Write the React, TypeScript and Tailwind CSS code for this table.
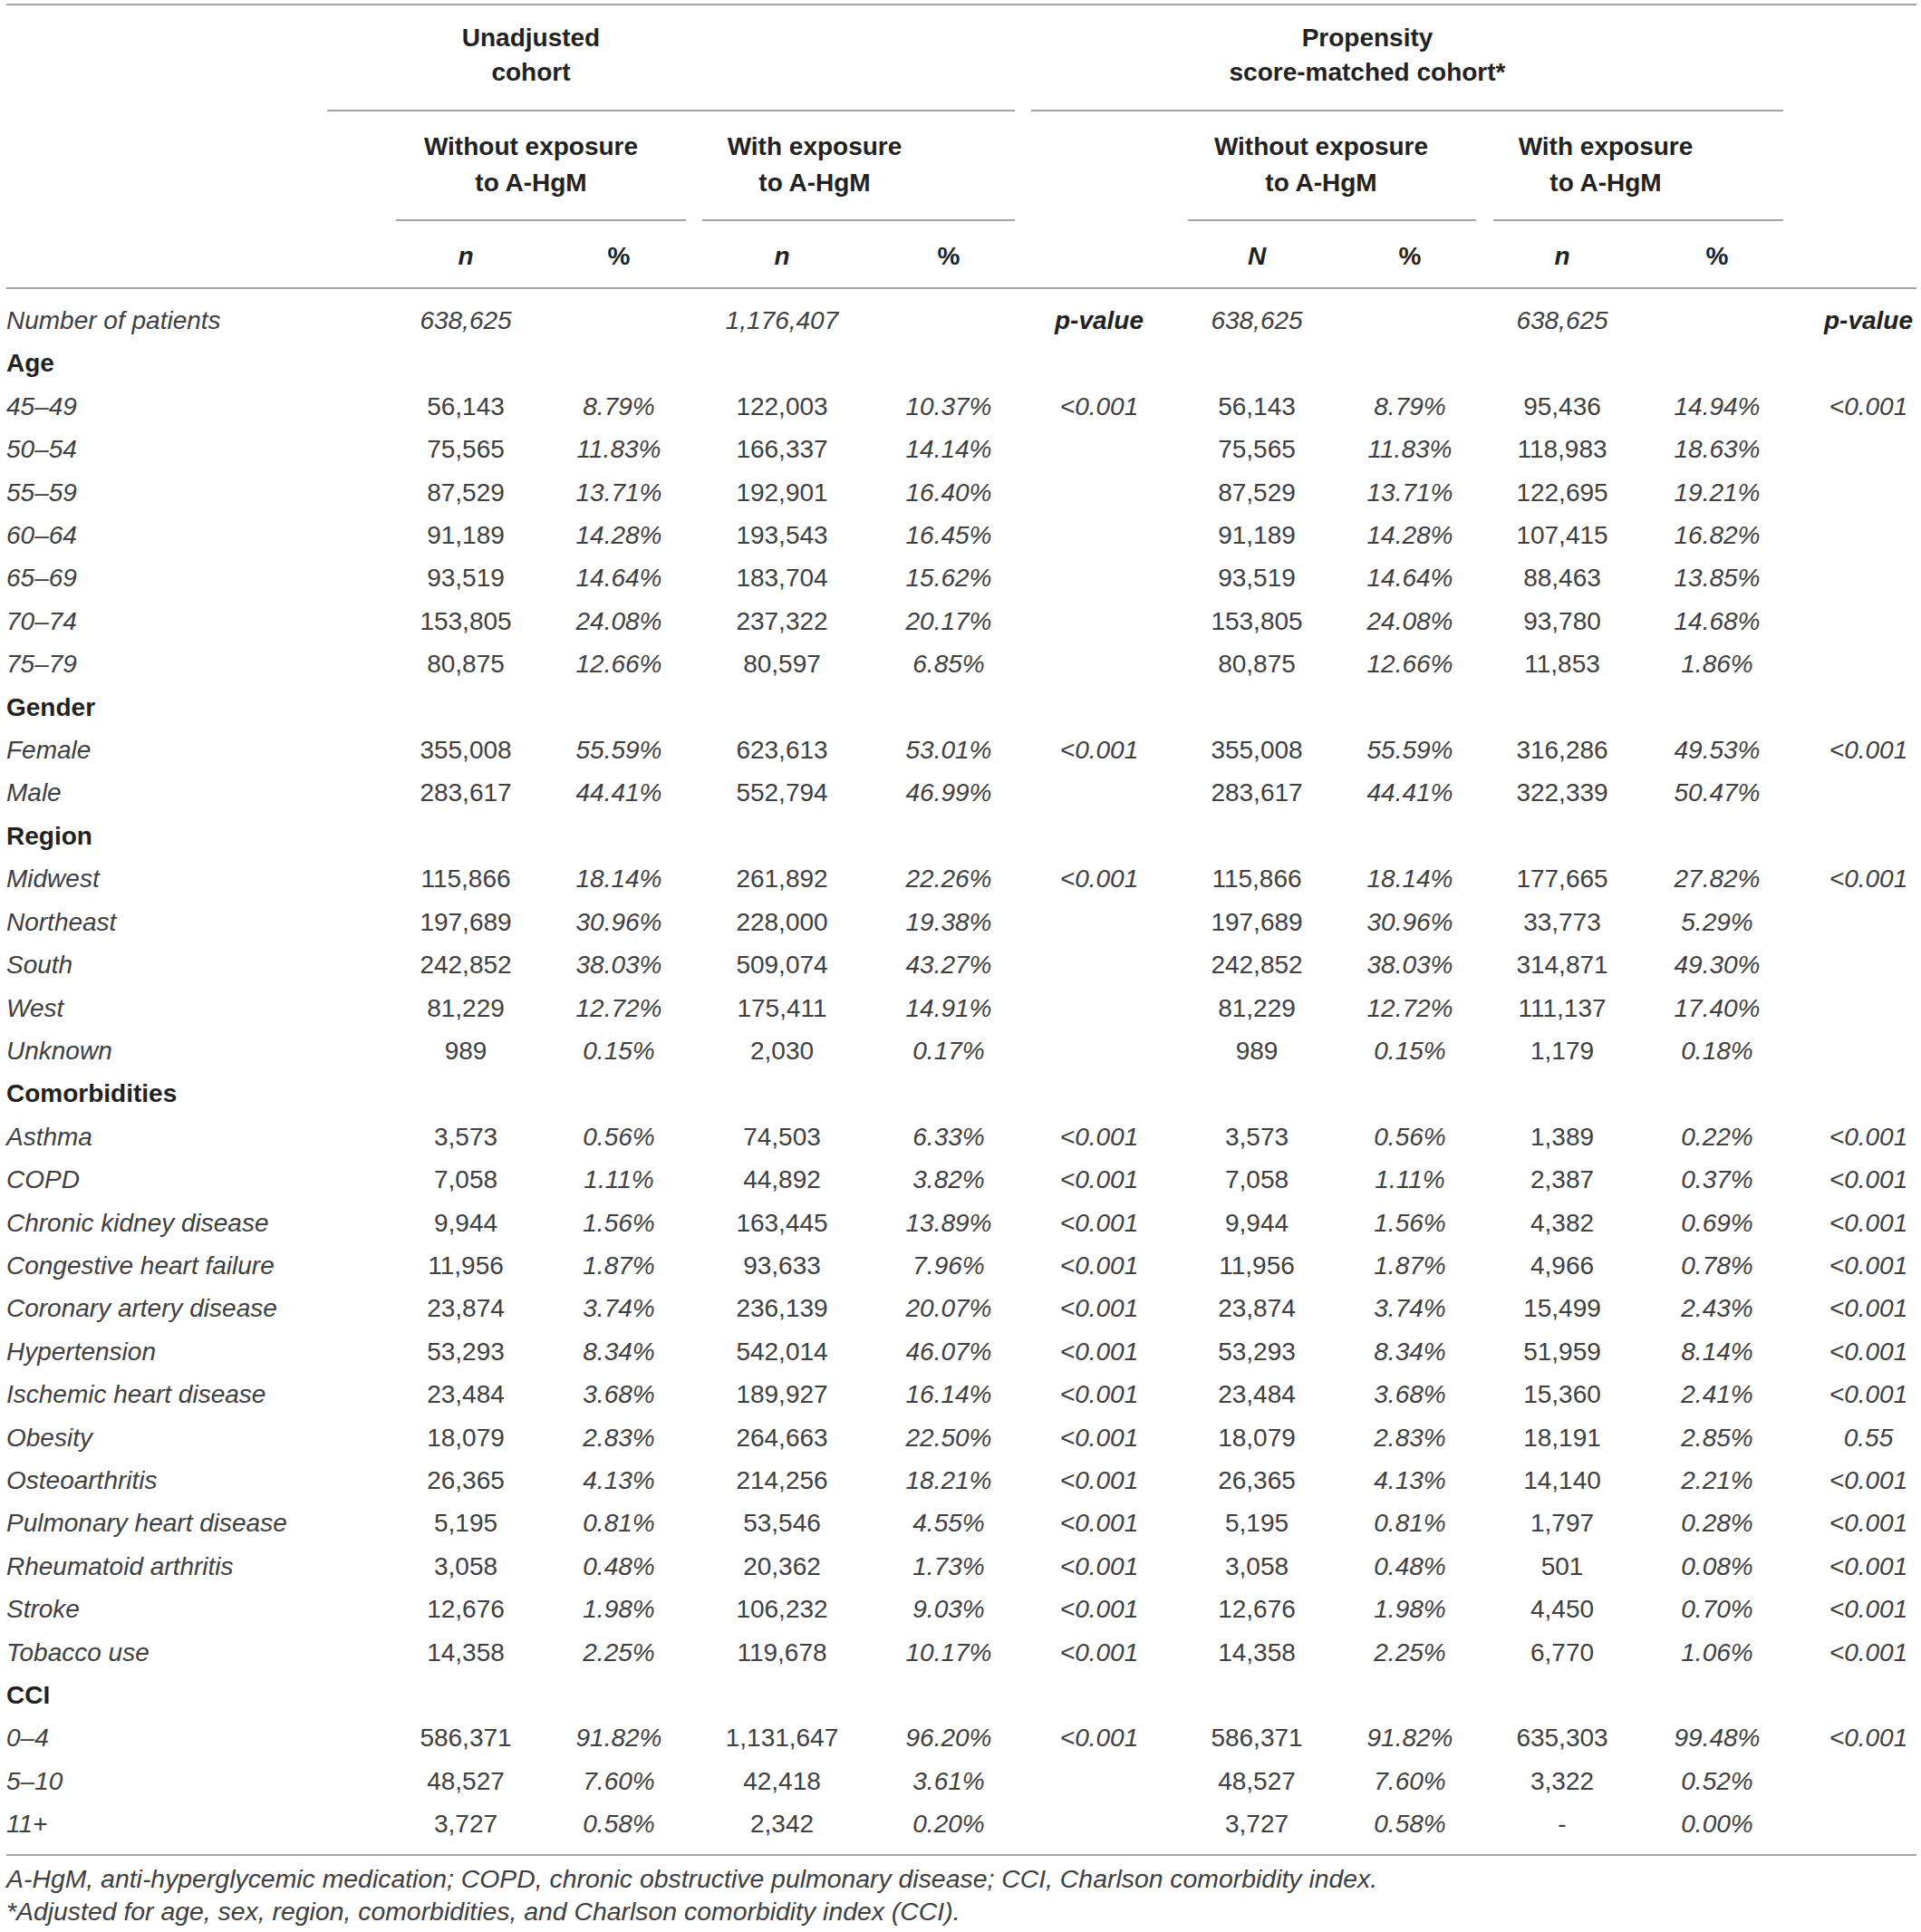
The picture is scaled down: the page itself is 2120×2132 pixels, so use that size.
const GRID =
  "grid grid-cols-[423px_168px_170px_190px_178px_154px_194px_144px_192px_150px_145px]";

type Row = { label: string; head?: boolean; top?: boolean; v?: string[] };

const rows: Row[] = [
  { label: "Number of patients", top: true, v: ["638,625", "", "1,176,407", "", "p-value", "638,625", "", "638,625", "", "p-value"] },
  { label: "Age", head: true },
  { label: "45–49", v: ["56,143", "8.79%", "122,003", "10.37%", "<0.001", "56,143", "8.79%", "95,436", "14.94%", "<0.001"] },
  { label: "50–54", v: ["75,565", "11.83%", "166,337", "14.14%", "", "75,565", "11.83%", "118,983", "18.63%", ""] },
  { label: "55–59", v: ["87,529", "13.71%", "192,901", "16.40%", "", "87,529", "13.71%", "122,695", "19.21%", ""] },
  { label: "60–64", v: ["91,189", "14.28%", "193,543", "16.45%", "", "91,189", "14.28%", "107,415", "16.82%", ""] },
  { label: "65–69", v: ["93,519", "14.64%", "183,704", "15.62%", "", "93,519", "14.64%", "88,463", "13.85%", ""] },
  { label: "70–74", v: ["153,805", "24.08%", "237,322", "20.17%", "", "153,805", "24.08%", "93,780", "14.68%", ""] },
  { label: "75–79", v: ["80,875", "12.66%", "80,597", "6.85%", "", "80,875", "12.66%", "11,853", "1.86%", ""] },
  { label: "Gender", head: true },
  { label: "Female", v: ["355,008", "55.59%", "623,613", "53.01%", "<0.001", "355,008", "55.59%", "316,286", "49.53%", "<0.001"] },
  { label: "Male", v: ["283,617", "44.41%", "552,794", "46.99%", "", "283,617", "44.41%", "322,339", "50.47%", ""] },
  { label: "Region", head: true },
  { label: "Midwest", v: ["115,866", "18.14%", "261,892", "22.26%", "<0.001", "115,866", "18.14%", "177,665", "27.82%", "<0.001"] },
  { label: "Northeast", v: ["197,689", "30.96%", "228,000", "19.38%", "", "197,689", "30.96%", "33,773", "5.29%", ""] },
  { label: "South", v: ["242,852", "38.03%", "509,074", "43.27%", "", "242,852", "38.03%", "314,871", "49.30%", ""] },
  { label: "West", v: ["81,229", "12.72%", "175,411", "14.91%", "", "81,229", "12.72%", "111,137", "17.40%", ""] },
  { label: "Unknown", v: ["989", "0.15%", "2,030", "0.17%", "", "989", "0.15%", "1,179", "0.18%", ""] },
  { label: "Comorbidities", head: true },
  { label: "Asthma", v: ["3,573", "0.56%", "74,503", "6.33%", "<0.001", "3,573", "0.56%", "1,389", "0.22%", "<0.001"] },
  { label: "COPD", v: ["7,058", "1.11%", "44,892", "3.82%", "<0.001", "7,058", "1.11%", "2,387", "0.37%", "<0.001"] },
  { label: "Chronic kidney disease", v: ["9,944", "1.56%", "163,445", "13.89%", "<0.001", "9,944", "1.56%", "4,382", "0.69%", "<0.001"] },
  { label: "Congestive heart failure", v: ["11,956", "1.87%", "93,633", "7.96%", "<0.001", "11,956", "1.87%", "4,966", "0.78%", "<0.001"] },
  { label: "Coronary artery disease", v: ["23,874", "3.74%", "236,139", "20.07%", "<0.001", "23,874", "3.74%", "15,499", "2.43%", "<0.001"] },
  { label: "Hypertension", v: ["53,293", "8.34%", "542,014", "46.07%", "<0.001", "53,293", "8.34%", "51,959", "8.14%", "<0.001"] },
  { label: "Ischemic heart disease", v: ["23,484", "3.68%", "189,927", "16.14%", "<0.001", "23,484", "3.68%", "15,360", "2.41%", "<0.001"] },
  { label: "Obesity", v: ["18,079", "2.83%", "264,663", "22.50%", "<0.001", "18,079", "2.83%", "18,191", "2.85%", "0.55"] },
  { label: "Osteoarthritis", v: ["26,365", "4.13%", "214,256", "18.21%", "<0.001", "26,365", "4.13%", "14,140", "2.21%", "<0.001"] },
  { label: "Pulmonary heart disease", v: ["5,195", "0.81%", "53,546", "4.55%", "<0.001", "5,195", "0.81%", "1,797", "0.28%", "<0.001"] },
  { label: "Rheumatoid arthritis", v: ["3,058", "0.48%", "20,362", "1.73%", "<0.001", "3,058", "0.48%", "501", "0.08%", "<0.001"] },
  { label: "Stroke", v: ["12,676", "1.98%", "106,232", "9.03%", "<0.001", "12,676", "1.98%", "4,450", "0.70%", "<0.001"] },
  { label: "Tobacco use", v: ["14,358", "2.25%", "119,678", "10.17%", "<0.001", "14,358", "2.25%", "6,770", "1.06%", "<0.001"] },
  { label: "CCI", head: true },
  { label: "0–4", v: ["586,371", "91.82%", "1,131,647", "96.20%", "<0.001", "586,371", "91.82%", "635,303", "99.48%", "<0.001"] },
  { label: "5–10", v: ["48,527", "7.60%", "42,418", "3.61%", "", "48,527", "7.60%", "3,322", "0.52%", ""] },
  { label: "11+", v: ["3,727", "0.58%", "2,342", "0.20%", "", "3,727", "0.58%", "-", "0.00%", ""] },
];

// n columns are upright, percentages and p-values italic
const upright = [0, 2, 5, 7];

function Line({ w }: { w: string }) {
  return <div className={`h-[2px] bg-[#a3a3a3] ${w}`} />;
}

function BodyRow({ row }: { row: Row }) {
  if (row.head) {
    return (
      <div className={`${GRID} leading-[47.4px]`}>
        <div className="font-bold text-[#222]">{row.label}</div>
      </div>
    );
  }
  return (
    <div className={`${GRID} leading-[47.4px]`}>
      <div className="italic">{row.label}</div>
      {row.v!.map((v, i) => {
        const isP = v === "p-value";
        const cls = [
          "text-center whitespace-nowrap",
          i === 9 ? "pl-[39px]" : "",
          isP ? "font-bold italic text-[#222]" : row.top || !upright.includes(i) ? "italic" : "",
        ].join(" ");
        return (
          <div key={i} className={cls}>
            {v}
          </div>
        );
      })}
    </div>
  );
}

export default function App() {
  return (
    <div className="bg-white min-h-screen font-['Liberation_Sans',Arial,sans-serif] text-[28px] text-[#404040]">
      <div className="ml-[7px] w-[2108px] pt-[4px]">
        <Line w="w-full" />

        {/* cohort header */}
        <div className="flex font-bold text-[#222] leading-[38px]">
          <div className="w-[354px]" />
          <div className="w-[759px] flex flex-col">
            <div className="w-[450px] text-center pt-[17px] pb-[22px]">
              Unadjusted
              <br />
              cohort
            </div>
            <Line w="w-full" />
          </div>
          <div className="w-[18px]" />
          <div className="w-[830px] flex flex-col">
            <div className="w-[742px] text-center pt-[17px] pb-[22px]">
              Propensity
              <br />
              score-matched cohort*
            </div>
            <Line w="w-full" />
          </div>
        </div>

        {/* exposure header */}
        <div className="flex font-bold text-[#222] leading-[40px]">
          <div className="w-[430px]" />
          <div className="w-[320px] flex flex-col">
            <div className="w-[298px] text-center pt-[19px] pb-[20px]">
              Without exposure
              <br />
              to A-HgM
            </div>
            <Line w="w-full" />
          </div>
          <div className="w-[18px]" />
          <div className="w-[345px] flex flex-col">
            <div className="w-[248px] text-center pt-[19px] pb-[20px]">
              With exposure
              <br />
              to A-HgM
            </div>
            <Line w="w-full" />
          </div>
          <div className="w-[191px]" />
          <div className="w-[318px] flex flex-col">
            <div className="w-[294px] text-center pt-[19px] pb-[20px]">
              Without exposure
              <br />
              to A-HgM
            </div>
            <Line w="w-full" />
          </div>
          <div className="w-[19px]" />
          <div className="w-[320px] flex flex-col">
            <div className="w-[248px] text-center pt-[19px] pb-[20px]">
              With exposure
              <br />
              to A-HgM
            </div>
            <Line w="w-full" />
          </div>
        </div>

        {/* n / % header */}
        <div className={`${GRID} font-bold text-[#222] leading-[40px] pt-[19px] pb-[14px]`}>
          <div />
          <div className="text-center italic">n</div>
          <div className="text-center">%</div>
          <div className="text-center italic">n</div>
          <div className="text-center">%</div>
          <div />
          <div className="text-center italic">N</div>
          <div className="text-center">%</div>
          <div className="text-center italic">n</div>
          <div className="text-center">%</div>
          <div />
        </div>
        <Line w="w-full" />

        <div className="pt-[11px] pb-[9px]">
          {rows.map((r, i) => (
            <BodyRow key={i} row={r} />
          ))}
        </div>
        <Line w="w-full" />

        <div className="mt-[7px] italic text-[28.4px] leading-[36px]">
          <p>
            A-HgM, anti-hyperglycemic medication; COPD, chronic obstructive pulmonary disease; CCI,
            Charlson comorbidity index.
          </p>
          <p>*Adjusted for age, sex, region, comorbidities, and Charlson comorbidity index (CCI).</p>
        </div>
      </div>
    </div>
  );
}
